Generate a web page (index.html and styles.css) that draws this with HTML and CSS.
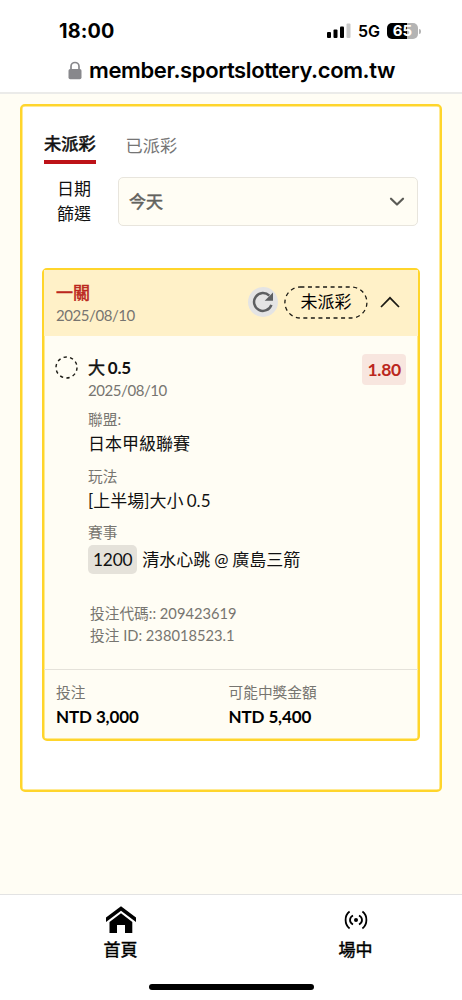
FILE: index.html
```html
<!DOCTYPE html>
<html lang="zh-Hant">
<head>
<meta charset="utf-8">
<meta name="viewport" content="width=device-width, initial-scale=1">
<title>未派彩</title>
<link rel="stylesheet" href="styles.css">
</head>
<body>
<div class="phone">
  <header class="browser">
    <div class="status">
      <span class="clock">18:00</span>
      <span class="indicators">
        <svg class="signal" width="24" height="16" viewBox="0 0 24 16"><rect x="0" y="9" width="4" height="6" rx="1"/><rect x="6.5" y="6.5" width="4" height="8.500" rx="1"/><rect x="13" y="3.500" width="4" height="11.500" rx="1"/><rect class="off" x="19.500" y="0.500" width="4" height="14.500" rx="1"/></svg>
        <span class="network">5G</span>
        <span class="battery"><span class="level">65</span><i class="cap"></i></span>
      </span>
    </div>
    <div class="address">
      <svg class="lock" width="14" height="19" viewBox="0 0 14 19"><path d="M3 9V5.500a4 4 0 0 1 8 0V9" fill="none" stroke="#88888c" stroke-width="1.700"/><rect x="0.500" y="8" width="13" height="10.300" rx="1.700" fill="#88888c"/></svg>
      <span class="url">member.sportslottery.com.tw</span>
    </div>
  </header>

  <main class="content">
    <section class="panel">
      <nav class="tabs">
        <span class="tab active">未派彩</span>
        <span class="tab">已派彩</span>
      </nav>
      <div class="filter">
        <span class="filter-label">日期<br>篩選</span>
        <div class="select">
          <span>今天</span>
          <svg width="16" height="10" viewBox="0 0 16 10"><path d="M2 1.700 8 7.500 14 1.700" fill="none" stroke="#5b5b56" stroke-width="2.200" stroke-linecap="round" stroke-linejoin="round"/></svg>
        </div>
      </div>

      <article class="ticket">
        <div class="ticket-head">
          <div class="ticket-title">
            <div class="legs">一關</div>
            <div class="date">2025/08/10</div>
          </div>
          <span class="refresh"><svg width="30" height="30" viewBox="0 0 30 30"><path d="M21.300 8.700A8.900 8.900 0 1 0 23.400 17.800" fill="none" stroke="#5d5f61" stroke-width="2.500"/><path d="M25 5.500V13.800H16.700Z" fill="#5d5f61"/></svg></span>
          <span class="pill"><svg class="pill-line" width="84" height="33" viewBox="0 0 84 33"><rect x="0.900" y="1" width="82" height="31" rx="15.500" fill="none" stroke="#1b1a14" stroke-width="1.300" stroke-dasharray="4 3.550"/></svg><span class="pill-text">未派彩</span></span>
          <svg class="chevron" width="20" height="12" viewBox="0 0 20 12"><path d="M1 11 10 1.800 19 11" fill="none" stroke="#1b1a14" stroke-width="1.700"/></svg>
        </div>

        <div class="bet">
          <svg class="pending" width="24" height="24" viewBox="0 0 24 24"><circle cx="11.500" cy="11.500" r="10.500" fill="none" stroke="#1b1a14" stroke-width="1.400" stroke-dasharray="3.300 3.297"/></svg>
          <div class="details">
            <div class="pick"><span class="medium">大</span> 0.5</div>
            <div class="date pick-date">2025/08/10</div>
            <div class="label league-label">聯盟:</div>
            <div class="value">日本甲級聯賽</div>
            <div class="label market-label">玩法</div>
            <div class="value market">[上半場]大小 0.5</div>
            <div class="label event-label">賽事</div>
            <div class="event"><span class="code">1200</span><span class="teams">清水心跳 @ 廣島三箭</span></div>
            <div class="refs">
              <div class="ref-code">投注代碼:: 209423619</div>
              <div class="ref-id">投注 ID: 238018523.1</div>
            </div>
          </div>
          <span class="odds">1.80</span>
        </div>

        <div class="totals">
          <div><div class="label">投注</div><div class="amount">NTD 3,000</div></div>
          <div><div class="label">可能中獎金額</div><div class="amount">NTD 5,400</div></div>
        </div>
      </article>
    </section>
  </main>

  <footer class="bottom">
    <nav class="menu">
      <div class="menu-item">
        <svg width="32" height="28" viewBox="0 0 32 28"><path d="M1 11.500 16 0.300 31 11.500V16L16 4.800 1 16Z"/><path d="M4.500 16 16 7.300 27.300 16V27H20V19H12V27H4.500Z"/></svg>
        <span>首頁</span>
      </div>
      <div class="menu-item">
        <svg width="24" height="28" viewBox="0 0 24 28"><circle cx="12" cy="14" r="2"/><g fill="none" stroke="#000" stroke-width="1.800"><path d="M9 9.500Q6 11 6 14T9 18.500M15 9.500Q18 11 18 14T15 18.500"/><path d="M5.600 5.600Q1.600 8.500 1.600 14T5.600 22.400M18.400 5.600Q22.400 8.500 22.400 14T18.400 22.400"/></g></svg>
        <span>場中</span>
      </div>
    </nav>
    <div class="home-bar"></div>
  </footer>
</div>
</body>
</html>
```

FILE: styles.css
```css
* { box-sizing: border-box; }
body { margin: 0; background: #fff; font-family: Lato, "Noto Sans CJK TC", sans-serif; color: #000; }
svg { display: block; flex: none; }
.phone { width: 462px; height: 1000px; display: flex; flex-direction: column; overflow: hidden; white-space: nowrap; }

.browser { height: 94px; border-bottom: 2px solid #ebebe9; font-family: Inter, sans-serif; flex: none; }
.status { height: 50px; padding: 12px 41px 0 59px; display: flex; justify-content: space-between; align-items: center; }
.clock { font-size: 19.8px; font-weight: 700; line-height: 24px; letter-spacing: 0.15px; }
.indicators { display: flex; align-items: center; }
.signal .off { fill: #c9c9c9; }
.network { margin-left: 7px; width: 22px; font-size: 16px; font-weight: 600; line-height: 20px; }
.battery { margin-left: 7px; display: flex; align-items: center; }
.level { width: 31px; height: 16px; border-radius: 5px; background: linear-gradient(90deg, #000 65%, #b4b4b4 65%); color: #fff; font-size: 15px; font-weight: 700; line-height: 16px; text-align: center; }
.cap { width: 2px; height: 5px; margin-left: 1px; border-radius: 0 2px 2px 0; background: #b4b4b4; }
.address { display: flex; align-items: center; height: 40px; padding-left: 68px; }
.url { margin-left: 7px; font-size: 22px; font-weight: 600; line-height: 28px; letter-spacing: -0.38px; }

.content { flex: 1; background: #fffdf4; padding: 10px 20px 0; }
.panel { height: 688px; background: #fff; border: 2px solid #ffd52b; box-shadow: inset 0 0 0 0.5px #ffd52b; border-radius: 5px; padding: 24px 20px 0; }
.tabs { display: flex; gap: 30px; padding-left: 2px; height: 34px; }
.tab { font-size: 17.2px; line-height: 31px; color: #757575; }
.tab.active { color: #111; -webkit-text-stroke: 0.6px; line-height: 27px; height: 34px; border-bottom: 4px solid #bd1218; }
.filter { margin-top: 13px; display: flex; padding: 0 2px 0 15px; }
.filter-label { width: 61px; margin-top: -1px; font-size: 17px; line-height: 25px; color: #111; }
.select { flex: 1; height: 49px; display: flex; justify-content: space-between; align-items: center; padding: 0 12px 0 10px; border: 1px solid #e8e5dd; border-radius: 5px; background: #fffdf4; color: #62625d; font-size: 17px; -webkit-text-stroke: 0.5px; line-height: 24px; }

.ticket { margin-top: 42px; height: 473px; border: 2px solid #ffd52b; box-shadow: inset 0 0 0 0.5px #ffd52b; border-radius: 5px; background: #fffdf4; }
.ticket-head { height: 66px; background: #fff1c8; display: flex; align-items: center; padding: 0 18px 2px 12px; }
.ticket-title { flex: 1; padding-top: 2px; }
.legs { font-size: 17px; line-height: 24px; -webkit-text-stroke: 0.5px; color: #bb271d; }
.date { font-size: 15px; line-height: 20px; letter-spacing: -0.43px; color: #777570; }
.refresh { width: 30px; height: 30px; border-radius: 50%; background: #e4e4e4; }
.pill { display: grid; place-items: center; margin-left: 6px; font-size: 17px; line-height: 30px; }
.pill-line, .pill-text { grid-area: 1 / 1; }
.chevron { margin-left: 12px; }

.bet { height: 334px; display: flex; border-bottom: 1px solid #e5e2da; padding: 18px 12px 0 11px; }
.pending { margin-top: 2px; }
.details { flex: 1; padding-left: 9px; color: #111; }
.pick { font-size: 17px; line-height: 24px; margin-top: 2px; font-weight: 700; word-spacing: -1px; letter-spacing: -0.2px; }
.medium { font-weight: 400; -webkit-text-stroke: 0.5px; }
.label { font-size: 14.7px; line-height: 20px; color: #777570; }
.league-label { margin-top: 9px; }
.value { font-size: 17px; line-height: 25px; margin-top: 2px; word-spacing: -1px; }
.market-label { margin-top: 10px; }
.event-label { margin-top: 9px; }
.market { margin-top: 2px; }
.event { display: flex; align-items: center; margin-top: 3px; gap: 5px; font-size: 17px; word-spacing: -0.5px; }
.teams { line-height: 24px; }
.code { height: 29px; line-height: 30px; padding: 0 5px; border-radius: 5px; background: #e5e2da; font-size: 17.3px; letter-spacing: -0.2px; }
.refs { margin-top: 28px; padding-left: 2px; font-size: 14.7px; line-height: 22px; color: #777570; }
.odds { height: 31px; padding: 0 5px; border-radius: 4px; background: #f8e6df; color: #bb271d; font-size: 17.500px; font-weight: 700; line-height: 31px; letter-spacing: -0.25px; }

.totals { display: grid; grid-template-columns: 172.5px 1fr; padding: 12px 12px 0; }
.amount { margin-top: 3px; font-size: 17px; line-height: 24px; font-weight: 700; letter-spacing: -0.12px; }

.bottom { height: 106px; flex: none; border-top: 1px solid #e3e3e3; background: #fff; display: flex; flex-direction: column; align-items: center; }
.menu { width: 462px; height: 89px; display: flex; padding-left: 3px; }
.menu-item { width: 235px; flex: none; padding-top: 11px; display: flex; flex-direction: column; align-items: center; gap: 4px; font-size: 17px; line-height: 24px; -webkit-text-stroke: 0.45px; }
.home-bar { width: 165px; height: 6px; border-radius: 3px; background: #000; }
```
